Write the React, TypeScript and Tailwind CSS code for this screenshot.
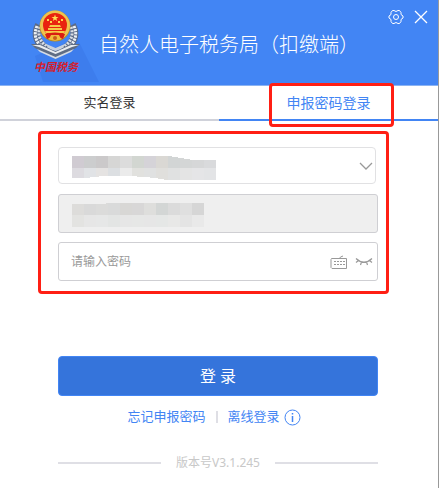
import React, { useState } from 'react';

const FONT = "font-['Noto_Sans','Noto_Sans_CJK_SC',sans-serif]";

const ACCOUNT_MOSAIC = [
  ['#d0cbd2', '#cccdce', '#cbc9ca', '#d6d6d5', '#dcdcdc', '#d2d6d1', '#d5d3d8', '#dad8d4', '#d2d5d5', '#d4d6d6', '#d6d7d8', '#d9dadc'],
  ['#dddbe0', '#e1e3e6', '#e5e3e2', '#dcdfe2', '#ebebeb', '#e1e1de', '#e0e1e1', '#e0dfdc', '#e0e1e1', '#e4e4e4', '#e5e5e7', '#e3e4e6'],
];

const COMPANY_MOSAIC = [
  ['#dddcda', '#d9d9d9', '#dbdbda', '#d9dada', '#d8d7d5', '#d8d7d7', '#dededc', '#d3d6d5', '#dbdbdb', '#dfdfdf', '#d6d6d6'],
  ['#e3e3e1', '#e6e6e6', '#e6e7e7', '#e3e5e4', '#e6e6e6', '#e6e7e6', '#e6e6e6', '#e5e7e6', '#e8e8e7', '#e4e4e4', '#e9e9e9'],
];

const Mosaic = ({ rows, clip, id }: { rows: string[][]; clip: string; id: string }) => (
  <svg
    width="146"
    height="26"
    viewBox="0 0 146 26"
    shapeRendering="crispEdges"
    className="pointer-events-none absolute left-[13px] top-2"
    aria-hidden="true"
  >
    <clipPath id={id}>
      <path d={clip} />
    </clipPath>
    <g clipPath={`url(#${id})`}>
      {rows.map((row, y) =>
        row.map((fill, x) => (
          <rect key={`${x}-${y}`} x={1 + x * 12} y={1 + y * 12} width="12" height="13" fill={fill} />
        ))
      )}
    </g>
  </svg>
);

const Emblem = () => (
  <svg width="99" height="85" viewBox="0 0 99 85" className="shrink-0" role="img" aria-label="中国税务">
    <path d="M77 38L99 82H43L35 56Z" fill="#3d7ded" />
    {/* wreath */}
    <g fill="none">
      <path d="M39 25C34 34 37 44 48 50" stroke="#5b6a86" strokeWidth="8" />
      <path d="M72 25C77 34 74 44 63 50" stroke="#5b6a86" strokeWidth="8" />
      <path d="M37 26C33 35 36 44 46 50" stroke="#eef1f4" strokeWidth="3" strokeDasharray="2.200 1" />
      <path d="M74 26C78 35 75 44 65 50" stroke="#eef1f4" strokeWidth="3" strokeDasharray="2.200 1" />
      <path d="M40 27C37 35 40 43 50 49" stroke="#d9dfe7" strokeWidth="3" strokeDasharray="2 1.300" />
      <path d="M71 27C74 35 71 43 61 49" stroke="#d9dfe7" strokeWidth="3" strokeDasharray="2 1.300" />
    </g>
    {/* ribbon */}
    <path d="M31 44L40 44L55.500 51L71 44L80 44L76 48L55.500 59L35 48Z" fill="#5f6d84" />
    <path d="M32 45L40 45L55.500 52L71 45L79 45L72 47L55.500 54L39 47Z" fill="#e9edf1" />
    <path d="M37 49L55.500 57L74 49L71 52L55.500 59L40 52Z" fill="#d5dce5" />
    <path d="M44 43L55.500 48L67 43L61 49L55.500 51L50 49Z" fill="#c9d1dc" />
    {/* national emblem */}
    <circle cx="55" cy="26" r="15.500" fill="#b98a25" />
    <circle cx="55" cy="25.500" r="15" fill="#edc44f" />
    <circle cx="55" cy="25" r="12" fill="#e9230f" />
    <path d="M55 14.500L55.900 17L58.500 17L56.400 18.600L57.200 21L55 19.500L52.800 21L53.600 18.600L51.500 17L54.100 17Z" fill="#ffdf55" />
    <path d="M47 19h2v2h-2zM61 19h2v2h-2zM50 21h2v2h-2zM58 21h2v2h-2z" fill="#ffd44d" />
    <path d="M50 25h10l1 2h-12zM48 28h14v2h-14zM45 31h20l-1 2h-18z" fill="#f5c947" />
    <path d="M45 34Q55 31 65 34L63 39Q55 35 47 39Z" fill="#d91d12" />
    <path d="M51 35h8l2 4q-6 3-12 0z" fill="#f0bd3c" />
    <circle cx="55" cy="38" r="2" fill="#c95d1a" />
    <text
      x="34"
      y="71"
      fontSize="11"
      fontStyle="italic"
      fontWeight="700"
      fill="#d4202c"
      fontFamily="'Noto Sans CJK SC', sans-serif"
    >
      中国税务
    </text>
  </svg>
);

const GearIcon = () => (
  <svg width="16" height="16" viewBox="0 0 16 16" fill="none" stroke="currentColor" strokeLinejoin="round">
    <path d="M4.500 1.500H6L8 2.500L10 1.500H11.500L13 3.500V5.500L15 7V9L13 10.500V12.500L11.500 14.500H10L8 13.500L6 14.500H4.500L3 12.500V10.500L1 9V7L3 5.500V3.500Z" />
    <circle cx="8" cy="8" r="2.500" />
  </svg>
);

const CloseIcon = () => (
  <svg width="14" height="14" viewBox="0 0 14 14" fill="none" stroke="currentColor" strokeWidth="1.300">
    <path d="M1 1L13 13M13 1L1 13" />
  </svg>
);

const KeyboardIcon = () => (
  <svg width="17" height="14" viewBox="0 0 17 14" fill="none" stroke="currentColor">
    <path d="M1.500 3.500H16.500V13.500H2L1 12.500V4.500Z" />
    <path d="M9.500 3.500L10.500 2L13 1" />
    <path d="M4 6.500H15M4 9.500H15" strokeDasharray="2 1" />
  </svg>
);

const ClosedEyeIcon = () => (
  <svg width="18" height="10" viewBox="0 0 18 10" fill="none" stroke="currentColor" strokeWidth="1.200">
    <path d="M1 1.500Q9 9 17 1.500M3.500 3.500L1 5.500M6.500 5L5.500 8M11.500 5L12.500 8M14.500 3.500L17 5.500" />
  </svg>
);

const InfoIcon = () => (
  <svg width="17" height="17" viewBox="0 0 17 17" fill="none" stroke="currentColor">
    <circle cx="8.500" cy="8.500" r="7.500" />
    <path d="M8.500 7V13M8.500 4V5.500" strokeWidth="1.500" />
  </svg>
);

const App = () => {
  const [tab, setTab] = useState('password');
  const [showPassword, setShowPassword] = useState(false);

  const tabClass = (name: string) =>
    tab === name
      ? 'h-full w-full border-b-2 border-[#4285f4] text-sm text-[#4285f4]'
      : 'h-full w-full border-b-2 border-[#d0d2da] text-[13px] text-[#333333]';

  return (
    <div className={`min-h-screen border-r border-[#999999] bg-white text-[13px] ${FONT}`}>
      <header className="flex border-b border-[#8bb3f2] bg-[#4285f4] text-white">
        <Emblem />
        <h1 className="mt-[30px] flex-1 whitespace-nowrap text-[20px] font-light leading-7 font-['Noto_Sans_CJK_SC',sans-serif]">
          自然人电子税务局（扣缴端）
        </h1>
        <div className="flex items-start gap-[10px] pr-[10px] pt-[9px]">
          <button type="button" aria-label="设置" className="flex h-4 items-center">
            <GearIcon />
          </button>
          <button type="button" aria-label="关闭" className="flex h-4 items-center">
            <CloseIcon />
          </button>
        </div>
      </header>

      <nav className="flex h-[35px]">
        <div className="flex-1">
          <button type="button" onClick={() => setTab('realname')} className={tabClass('realname')}>
            实名登录
          </button>
        </div>
        <div className="relative flex-1">
          <button type="button" onClick={() => setTab('password')} className={tabClass('password')}>
            申报密码登录
          </button>
          <div className="pointer-events-none absolute -bottom-[6px] -top-[3px] left-[50px] right-[44px] rounded-sm border-3 border-[#ff1f14]" />
        </div>
      </nav>

      <form onSubmit={(e) => e.preventDefault()}>
        <div className="ml-[38px] mr-[49px] mt-[10px] rounded-sm border-3 border-[#ff1f14] pb-[10px] pl-[17px] pr-2 pt-[13px]">
          <div className="relative mr-[2px] text-[#999999]">
            <select
              aria-label="账号"
              className="block h-[37px] w-full appearance-none rounded border border-[#e1e1e3] bg-white px-3"
            />
            <Mosaic rows={ACCOUNT_MOSAIC} id="account-mosaic" clip="M1 1H101V2H107V3H113V4H119V5H145V25H93V24H87V23H79V22H66V21H28V22H19V23H1Z" />
            <svg
              width="14"
              height="8"
              viewBox="0 0 14 8"
              fill="none"
              stroke="currentColor"
              strokeWidth="1.300"
              className="pointer-events-none absolute right-[3px] top-[15px]"
            >
              <path d="M1 1L7 7L13 1" />
            </svg>
          </div>

          <div className="relative mt-[10px]">
            <input
              aria-label="单位名称"
              readOnly
              className="block h-[39px] w-full rounded-[3px] border border-[#cfcfd3] bg-[#efefef] px-3"
            />
            <Mosaic rows={COMPANY_MOSAIC} id="company-mosaic" clip="M1 2H35V1H133V25H1Z" />
          </div>

          <div className="mt-[9px] flex h-[39px] items-center gap-2 rounded-[3px] border border-[#cfcfd3] pl-3 pr-1 text-[#999999]">
            <input
              type={showPassword ? 'text' : 'password'}
              aria-label="密码"
              placeholder="请输入密码"
              className="min-w-0 flex-1 text-xs outline-none placeholder:text-[#999999]"
            />
            <button type="button" aria-label="软键盘">
              <KeyboardIcon />
            </button>
            <button type="button" aria-label="显示密码" onClick={() => setShowPassword(!showPassword)}>
              <ClosedEyeIcon />
            </button>
          </div>
        </div>

        <div className="ml-[58px] mr-[60px] mt-[62px]">
          <button
            type="submit"
            className="block h-10 w-full rounded border border-[#4285f4] bg-[#3574db] text-base text-white"
          >
            登 录
          </button>

          <div className="mt-[11px] flex h-5 items-center justify-center pr-2 text-[#4285f4]">
            <a href="#forgot">忘记申报密码</a>
            <span className="mx-[10px] h-3 w-[2px] bg-[#dfdfe5]" />
            <a href="#offline" className="flex items-center gap-1">
              离线登录
              <InfoIcon />
            </a>
          </div>

          <div className="mt-[26px] flex items-center gap-[15px] pb-4 text-xs leading-5 text-[#c8c8c8]">
            <span className="h-[2px] flex-1 bg-[#dfdfe5]" />
            版本号V3.1.245
            <span className="h-[2px] flex-1 bg-[#dfdfe5]" />
          </div>
        </div>
      </form>
    </div>
  );
};

export default App;
